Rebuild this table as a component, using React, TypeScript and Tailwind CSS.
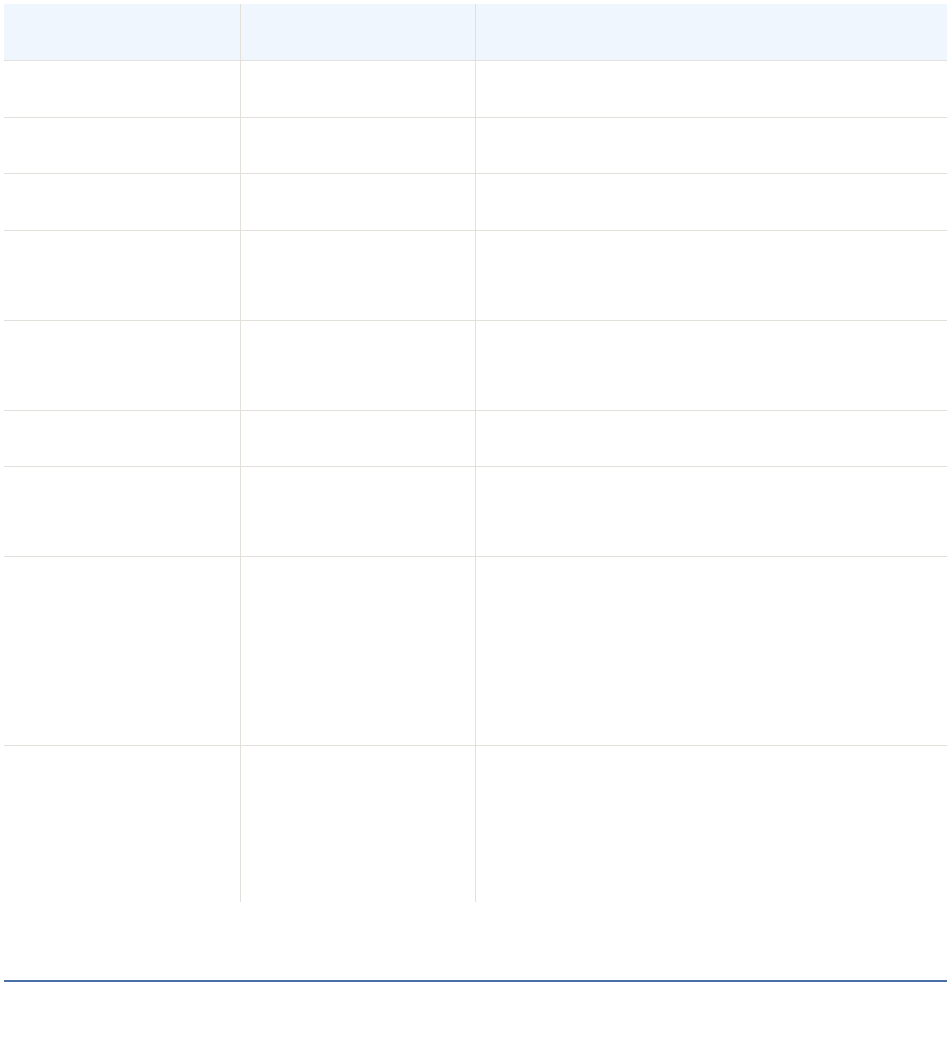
const rows = [57, 56, 57, 90, 90, 56, 90, 189, 157];

export default function App() {
  return (
    <div className="min-h-[1045px] bg-white pt-1 pl-1 pr-[3px] font-['Liberation_Sans',sans-serif]">
      <table className="w-full table-fixed border-collapse">
        <colgroup>
          <col className="w-[236px]" />
          <col className="w-[235px]" />
          <col />
        </colgroup>
        <thead>
          <tr className="h-[56px] bg-[#f0f6fe]">
            <th className="border-r border-b border-[#e3e0dc]" />
            <th className="border-r border-b border-[#e3e0dc]" />
            <th className="border-b border-[#e3e0dc]" />
          </tr>
        </thead>
        <tbody>
          {rows.map((h, i) => (
            <tr
              key={i}
              style={{ height: h }}
              className={i < rows.length - 1 ? 'border-b border-[#e3e0dc]' : ''}
            >
              <td className="border-r border-[#e3e0dc]" />
              <td className="border-r border-[#e3e0dc]" />
              <td />
            </tr>
          ))}
        </tbody>
      </table>
      <div className="mt-[78px] h-[2px] bg-[#4a6fa8]" />
    </div>
  );
}
